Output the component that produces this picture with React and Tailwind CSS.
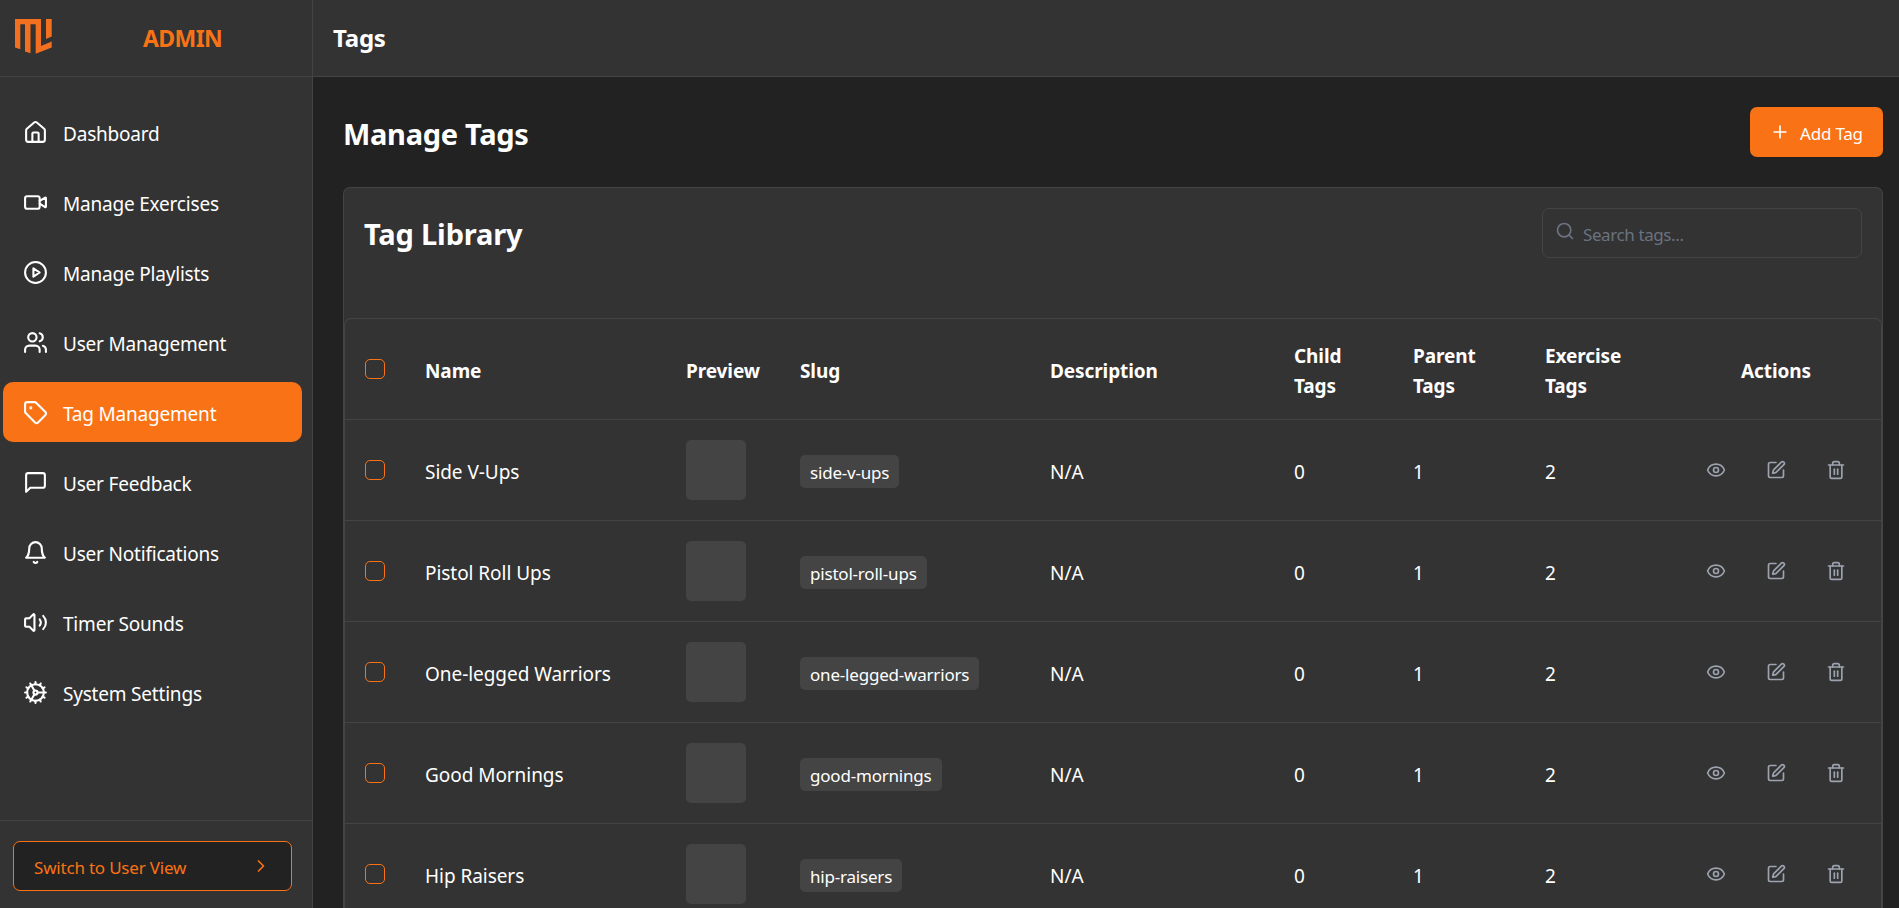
import React, { useState } from "react";
import {
	House,
	Users,
	Tag,
	Cog,
	ChevronRight,
	Plus,
	Search,
	Eye,
	SquarePen,
	Trash2,
} from "lucide-react";

const Icon = ({ children }) => (
	<svg
		viewBox="0 0 24 24"
		fill="none"
		stroke="currentColor"
		strokeWidth="2"
		strokeLinecap="round"
		strokeLinejoin="round"
		className="w-[25px] h-[25px]">
		{children}
	</svg>
);

const VideoIcon = () => (
	<Icon>
		<path d="m16 13 5.223 3.482a.5.5 0 0 0 .777-.416V7.87a.5.5 0 0 0-.752-.432L16 10.5" />
		<rect x="2" y="6" width="14" height="12" rx="2" />
	</Icon>
);

const PlayIcon = () => (
	<Icon>
		<circle cx="12" cy="12" r="10" />
		<polygon points="10 8 16 12 10 16 10 8" />
	</Icon>
);

const FeedbackIcon = () => (
	<Icon>
		<path d="M21 15a2 2 0 0 1-2 2H7l-4 4V5a2 2 0 0 1 2-2h14a2 2 0 0 1 2 2z" />
	</Icon>
);

const BellIcon = () => (
	<Icon>
		<path d="M6 8a6 6 0 0 1 12 0c0 7 3 9 3 9H3s3-2 3-9" />
		<path d="M10.3 21a1.94 1.94 0 0 0 3.4 0" />
	</Icon>
);

const SoundIcon = () => (
	<Icon>
		<path d="M11 4.702a.705.705 0 0 0-1.203-.498L6.413 7.587A1.4 1.4 0 0 1 5.416 8H3a1 1 0 0 0-1 1v6a1 1 0 0 0 1 1h2.416a1.4 1.4 0 0 1 .997.413l3.383 3.384A.705.705 0 0 0 11 19.298z" />
		<path d="M16 9a5 5 0 0 1 0 6" />
		<path d="M19.364 18.364a9 9 0 0 0 0-12.728" />
	</Icon>
);

const Logo = () => (
	<svg viewBox="0 0 37 35" className="w-[37px] h-[35px]" fill="#f37021">
		<path d="M0 0H26V27L36.700 22.500V28.500L20.700 34.700V5.300H15.500V34.300L10 32.500V5.300H5.300V30.300L0 28.500Z" />
		<path d="M31 0H36.700V17.500L31 20Z" />
	</svg>
);

const navItems = [
	{ label: "Dashboard", icon: House },
	{ label: "Manage Exercises", icon: VideoIcon },
	{ label: "Manage Playlists", icon: PlayIcon },
	{ label: "User Management", icon: Users },
	{ label: "Tag Management", icon: Tag },
	{ label: "User Feedback", icon: FeedbackIcon },
	{ label: "User Notifications", icon: BellIcon },
	{ label: "Timer Sounds", icon: SoundIcon },
	{ label: "System Settings", icon: Cog },
];

const tags = [
	{ name: "Side V-Ups", slug: "side-v-ups" },
	{ name: "Pistol Roll Ups", slug: "pistol-roll-ups" },
	{ name: "One-legged Warriors", slug: "one-legged-warriors" },
	{ name: "Good Mornings", slug: "good-mornings" },
	{ name: "Hip Raisers", slug: "hip-raisers" },
];

const columns =
	"grid grid-cols-[60px_261px_114px_250px_244px_119px_132px_126px_1fr] items-center pl-5 border-b border-[#444]";

const Checkbox = ({ label }) => (
	<button
		title={label}
		className="block w-5 h-5 rounded-[5px] border border-[#f97316]"
	/>
);

function Sidebar({ active, setActive }) {
	return (
		<aside className="w-[313px] shrink-0 flex flex-col bg-[#333] border-r border-[#444]">
			<div className="h-[77px] shrink-0 flex items-start border-b border-[#444] pl-[15px] pt-[19px]">
				<Logo />
				<span className="ml-[91px] mt-[2px] text-[23px] leading-[34px] font-bold text-[#f97316] tracking-[-0.6px]">
					ADMIN
				</span>
			</div>
			<nav className="flex-1 flex flex-col gap-[10px] pt-[25px] pl-[3px] pr-[10px]">
				{navItems.map(({ label, icon: NavIcon }) => (
					<button
						key={label}
						onClick={() => setActive(label)}
						className={`h-[60px] shrink-0 flex items-center gap-[15px] pl-5 rounded-[10px] text-[19px] tracking-[-0.2px] ${
							active === label && "bg-[#f97316]"
						}`}>
						<NavIcon size={25} />
						<span className="pt-[5px]">{label}</span>
					</button>
				))}
			</nav>
			<div className="h-[88px] shrink-0 border-t border-[#444] pt-5 pl-[13px] pr-5">
				<button className="w-full h-[50px] flex items-center justify-between pl-5 pr-5 rounded-[7px] border border-[#f97316] bg-[#222] text-[#f97316] text-[17px] tracking-[-0.2px]">
					<span className="pt-[3px]">Switch to User View</span>
					<ChevronRight size={20} />
				</button>
			</div>
		</aside>
	);
}

function TagRow({ tag }) {
	return (
		<div className={`${columns} h-[101px] shrink-0`}>
			<Checkbox label={`Select ${tag.name}`} />
			<span className="pt-[5px] tracking-[-0.05px]">{tag.name}</span>
			<div className="w-[60px] h-[60px] rounded-[5px] bg-[#444]" />
			<div className="flex">
				<span className="flex items-center h-[33px] mt-[3px] px-[10px] pt-[2px] rounded-[5px] bg-[#444] text-[17px] tracking-[-0.2px]">
					{tag.slug}
				</span>
			</div>
			<span className="pt-[5px]">N/A</span>
			<span className="pt-[5px]">0</span>
			<span className="pt-[5px]">1</span>
			<span className="pt-[5px]">2</span>
			<div className="flex justify-end gap-10 pr-[35px] text-[#9ca3af]">
				<Eye size={20} />
				<SquarePen size={20} />
				<Trash2 size={20} />
			</div>
		</div>
	);
}

export default function App() {
	const [active, setActive] = useState("Tag Management");

	return (
		<div className="flex w-full h-screen overflow-hidden bg-[#222] text-white font-['Noto_Sans','Open_Sans',sans-serif]">
			<Sidebar active={active} setActive={setActive} />
			<div className="flex-1 min-w-0 flex flex-col">
				<header className="h-[77px] shrink-0 flex items-center pl-5 bg-[#333] border-b border-[#444]">
					<h1 className="text-[24px] font-bold tracking-[-0.2px]">Tags</h1>
				</header>
				<main className="flex-1 min-h-0 flex flex-col overflow-hidden pt-[30px] pl-[30px] pr-4">
					<div className="h-[50px] shrink-0 flex items-center justify-between mb-[30px]">
						<h2 className="pt-[3px] text-[29px] font-bold tracking-[-0.3px]">
							Manage Tags
						</h2>
						<button className="w-[133px] h-[50px] flex items-center gap-[10px] pl-5 rounded-[7px] bg-[#f97316] text-[17px] tracking-[-0.2px]">
							<Plus size={20} />
							<span className="pt-[3px]">Add Tag</span>
						</button>
					</div>
					<section className="shrink-0 rounded-t-[7px] border border-b-0 border-[#444] bg-[#333]">
						<div className="h-[130px] flex items-start justify-between p-5">
							<h3 className="pt-px text-[29px] leading-[50px] font-bold tracking-[-0.15px]">
								Tag Library
							</h3>
							<div className="w-[320px] h-[50px] flex items-center gap-[8px] pl-3 rounded-[7px] border border-[#444] text-[#6b7280]">
								<Search size={20} className="-mt-[5px]" />
								<input
									placeholder="Search tags..."
									className="bg-transparent pt-[3px] text-[17px] tracking-[-0.4px] outline-none placeholder:text-[#6b7280]"
								/>
							</div>
						</div>
						<div className="flex flex-col rounded-t-[7px] border border-b-0 border-[#444] text-[19px]">
							<div
								className={`${columns} h-[101px] shrink-0 font-bold leading-[30px] tracking-[-0.1px]`}>
								<Checkbox label="Select all" />
								<span className="pt-[3px]">Name</span>
								<span className="pt-[3px]">Preview</span>
								<span className="pt-[3px]">Slug</span>
								<span className="pt-[3px]">Description</span>
								<span className="w-[60px] pt-[3px]">Child Tags</span>
								<span className="w-[70px] pt-[3px]">Parent Tags</span>
								<span className="w-[90px] pt-[3px]">Exercise Tags</span>
								<span className="pt-[3px] text-center">Actions</span>
							</div>
							{tags.map((tag) => (
								<TagRow key={tag.slug} tag={tag} />
							))}
						</div>
					</section>
				</main>
			</div>
		</div>
	);
}
